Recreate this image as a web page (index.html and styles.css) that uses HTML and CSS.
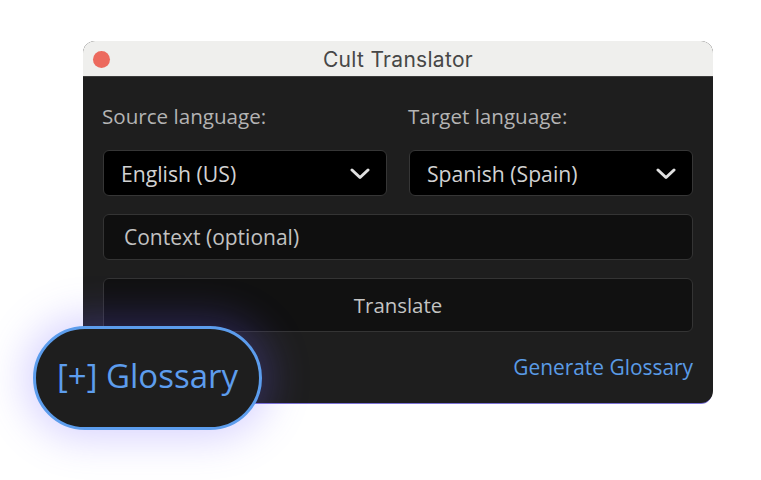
FILE: index.html
```html
<!DOCTYPE html>
<html>
<head>
<meta charset="utf-8">
<link rel="stylesheet" href="styles.css">
</head>
<body>
<div class="stage">
  <div class="window">
    <div class="titlebar">
      <span class="close"></span>
      <span class="title">Cult Translator</span>
    </div>
    <div class="content">
      <div class="row">
        <div class="field">
          <label class="label">Source language:</label>
          <div class="select"><span>English (US)</span>
            <svg class="chev" width="20" height="12" viewBox="0 0 20 12"><path d="M2 2 L10 9.5 L18 2" fill="none" stroke="#e0e0e0" stroke-width="3" stroke-linecap="round" stroke-linejoin="round"/></svg>
          </div>
        </div>
        <div class="field">
          <label class="label">Target language:</label>
          <div class="select"><span>Spanish (Spain)</span>
            <svg class="chev" width="20" height="12" viewBox="0 0 20 12"><path d="M2 2 L10 9.5 L18 2" fill="none" stroke="#e0e0e0" stroke-width="3" stroke-linecap="round" stroke-linejoin="round"/></svg>
          </div>
        </div>
      </div>
      <div class="input">Context (optional)</div>
      <div class="button">Translate</div>
      <div class="footer"><a class="link">Generate Glossary</a></div>
    </div>
  </div>
  <div class="pill">[+] Glossary</div>
</div>
</body>
</html>
```
FILE: styles.css
```css
* { box-sizing: border-box; }
html, body { margin: 0; padding: 0; background: #ffffff; }
body { font-family: "Open Sans", "Noto Sans", sans-serif; }
.stage { position: relative; width: 761px; height: 480px; padding: 41px 0 0 83px; }
.window { width: 630px; height: 362px; border-radius: 12px; overflow: hidden; background: #1e1e1e; display: flex; flex-direction: column; box-shadow: 0 2px 0 -1px #7b72d6; }
.titlebar { height: 36px; background: #efefed; border-bottom: 1px solid #3c3c3c; display: flex; align-items: center; justify-content: center; position: relative; }
.close { position: absolute; left: 10px; top: 10px; width: 17px; height: 17px; border-radius: 50%; background: #ec6a5e; }
.title { font-family: "Inter", "Liberation Sans", sans-serif; font-size: 21px; color: #474747; letter-spacing: 0.3px; margin-top: 1px; }
.content { padding: 26px 20px 0 20px; display: flex; flex-direction: column; }
.row { display: flex; gap: 22px; }
.field { flex: 1; display: flex; flex-direction: column; }
.label { font-size: 20.6px; color: #b4b4b4; line-height: 26px; margin-left: -1px; margin-bottom: 21px; }
.select { height: 46px; background: #000; border: 1px solid #363636; border-radius: 6px; display: flex; align-items: center; justify-content: space-between; padding: 0 16px 0 17px; font-size: 21.2px; color: #d2d2d2; }
.chev { margin-top: 1px; }
.input { margin-top: 18px; height: 46px; background: #0f0f0f; border: 1px solid #343434; border-radius: 6px; display: flex; align-items: center; padding-left: 20px; font-size: 21px; color: #c2c2c2; }
.button { margin-top: 18px; height: 54px; background: #111111; border: 1px solid #343434; border-radius: 6px; display: flex; align-items: center; justify-content: center; font-size: 20.4px; color: #c4c4c4; }
.footer { display: flex; justify-content: flex-end; margin-top: 21px; }
.link { font-size: 20.9px; color: #5a9be6; line-height: 28px; }
.pill { position: absolute; left: 33px; top: 326px; width: 229px; height: 104px; border-radius: 52px; border: 3px solid #5c9ded; background: #1e1e1e; display: flex; align-items: center; justify-content: center; font-size: 33px; color: #5d9ded; box-shadow: 0 0 40px 8px rgba(112, 92, 255, 0.28); padding-bottom: 6px; }
```
